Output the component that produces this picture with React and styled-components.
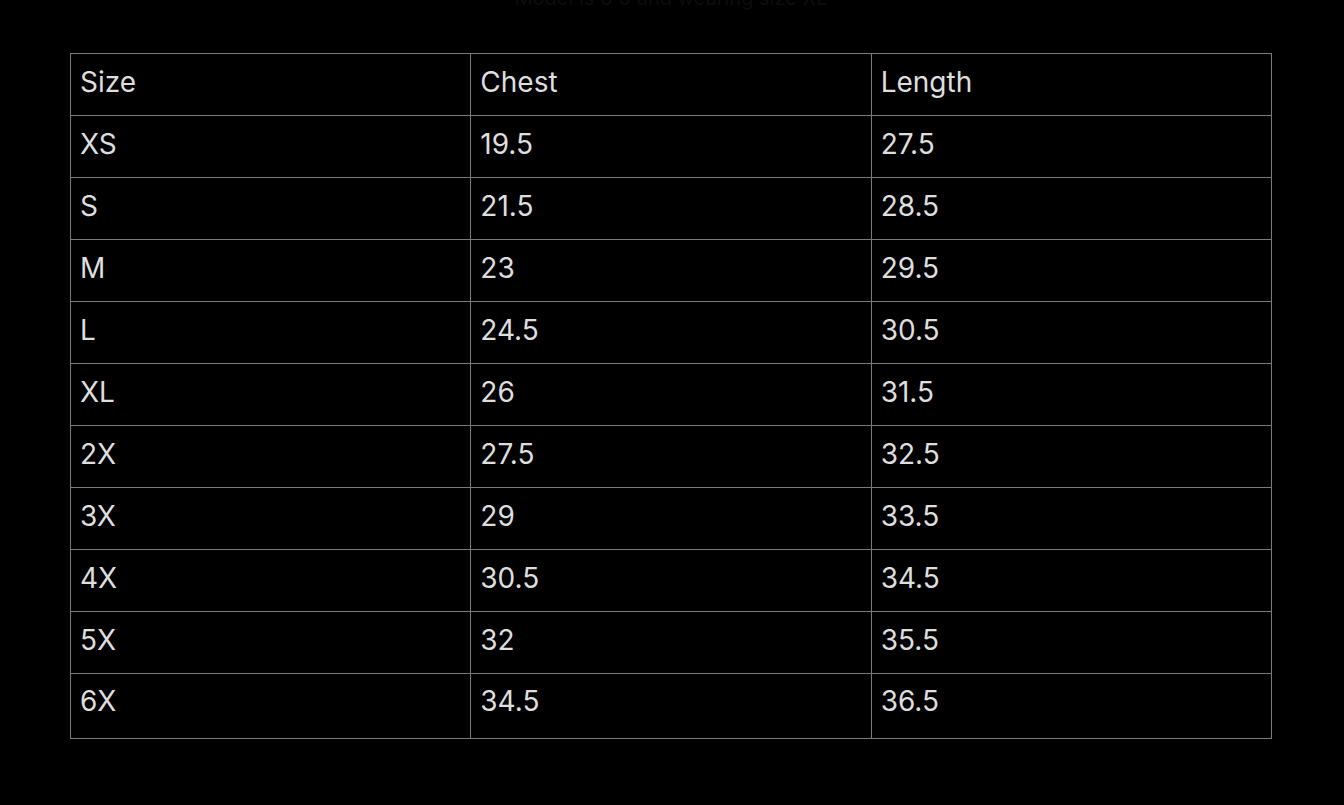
import React from 'react'
import styled, { createGlobalStyle } from 'styled-components'

const GlobalStyle = createGlobalStyle`
    html, body {
        margin: 0;
        padding: 0;
        background: #000;
    }
    body {
        font-family: Inter, "Noto Sans", "Liberation Sans", sans-serif;
        color: #e6e6e6;
    }
`

const sizes = [
    ['XS', '19.5', '27.5'],
    ['S', '21.5', '28.5'],
    ['M', '23', '29.5'],
    ['L', '24.5', '30.5'],
    ['XL', '26', '31.5'],
    ['2X', '27.5', '32.5'],
    ['3X', '29', '33.5'],
    ['4X', '30.5', '34.5'],
    ['5X', '32', '35.5'],
    ['6X', '34.5', '36.5'],
]

function App() {
    return (
        <>
            <GlobalStyle />
            <Page>
                <Caption>Model is 6'0 and wearing size XL</Caption>
                <SizeTable>
                    <tbody>
                        <Row>
                            <Cell>Size</Cell>
                            <Cell>Chest</Cell>
                            <Cell>Length</Cell>
                        </Row>
                        {sizes.map((item, index) => (
                            <Row key={item[0]} $last={index === sizes.length - 1}>
                                {item.map((value, i) => (
                                    <Cell key={i}>{value}</Cell>
                                ))}
                            </Row>
                        ))}
                    </tbody>
                </SizeTable>
            </Page>
        </>
    )
}

export default App

const Page = styled.div`
    display: flex;
    flex-direction: column;
    align-items: center;
    padding: 0 72px 0 70px;
    height: 805px;
    overflow: hidden;
`

const Caption = styled.p`
    margin: -14px 0 0;
    height: 24px;
    font-size: 20px;
    line-height: 24px;
    color: #0d0d0d;
    text-align: center;
`

const SizeTable = styled.table`
    margin-top: 43px;
    width: 1202px;
    border-collapse: collapse;
    table-layout: fixed;
`

const Row = styled.tr`
    height: ${props => props.$last ? '65px' : '62px'};
`

const Cell = styled.td`
    border: 1px solid #7a7a7a;
    padding: 0 10px 6px 9px;
    font-size: 28px;
    font-weight: 400;
    line-height: 32px;
    color: #dedede;
    vertical-align: middle;
    text-align: left;
    tr:last-child & {
        padding-bottom: 10px;
    }
`
